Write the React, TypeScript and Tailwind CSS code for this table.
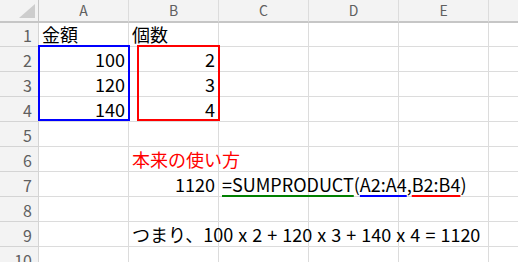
import React from "react";

const font = { fontFamily: '"Noto Sans CJK JP", "Noto Sans", sans-serif' };

const cols = ["A", "B", "C", "D", "E", "F"];

type Cell = { text?: React.ReactNode; align?: "left" | "right"; className?: string };

// row number -> column index -> cell
const data: Record<number, Record<number, Cell>> = {
    1: { 0: { text: "金額" }, 1: { text: "個数" } },
    2: { 0: { text: "100", align: "right" }, 1: { text: "2", align: "right" } },
    3: { 0: { text: "120", align: "right" }, 1: { text: "3", align: "right" } },
    4: { 0: { text: "140", align: "right" }, 1: { text: "4", align: "right" } },
    6: { 1: { text: "本来の使い方", className: "text-[#ff0000]" } },
    7: {
        1: { text: "1120", align: "right" },
        2: {
            text: (
                <>
                    <span className="underline decoration-2 decoration-[#008000] underline-offset-[3px]">=SUMPRODUCT</span>
                    (
                    <span className="underline decoration-2 decoration-[#0000ff] underline-offset-[3px]">A2:A4</span>
                    ,
                    <span className="underline decoration-2 decoration-[#ff0000] underline-offset-[3px]">B2:B4</span>
                    )
                </>
            ),
        },
    },
    9: { 1: { text: "つまり、100 x 2 + 120 x 3 + 140 x 4 = 1120", className: "[word-spacing:1px]" } },
};

function Row({ n }: { n: number }) {
    const first = n === 1;
    return (
        <div className={`flex ${first ? "h-[24px]" : "h-[25px]"}`}>
            <div className="w-[39px] shrink-0 bg-[#f3f3f3] border-r border-b border-[#d4d4d4] flex items-end justify-end pr-[6px] pb-[2px] text-[16px] leading-[18px] text-[#5f5f5f]">
                {n}
            </div>
            {cols.map((c, i) => {
                const cell = data[n]?.[i];
                return (
                    <div
                        key={c}
                        className={`w-[90px] shrink-0 border-r border-b border-[#dcdcdc] flex items-end pb-[3px] text-[18px] leading-[18px] text-black whitespace-nowrap relative ${cell?.align === "right" ? "justify-end pr-[3px]" : "pl-[3px]"}`}
                    >
                        {cell && (
                            <span className={`${cell.align === "right" ? "" : "absolute left-[3px] bottom-[3px]"} ${cell.className ?? ""} z-10`}>
                                {cell.text}
                            </span>
                        )}
                    </div>
                );
            })}
        </div>
    );
}

export default function App() {
    return (
        <div className="w-[518px] h-[262px] overflow-hidden bg-white relative" style={font}>
            {/* column header */}
            <div className="flex h-[23px]">
                <div className="w-[39px] shrink-0 bg-[#f3f3f3] border-r border-b-2 border-[#c6c6c6] flex items-end justify-end pr-[3px] pb-[3px]">
                    <svg width="16" height="14" viewBox="0 0 16 14">
                        <polygon points="16,0 16,14 0,14" fill="#cdcdcd" />
                    </svg>
                </div>
                {cols.map((c) => (
                    <div
                        key={c}
                        className="w-[90px] shrink-0 bg-[#f3f3f3] border-r border-b-2 border-r-[#dcdcdc] border-b-[#c6c6c6] flex items-center justify-center text-[14px] text-[#5f5f5f]"
                    >
                        {c}
                    </div>
                ))}
            </div>
            {Array.from({ length: 10 }, (_, i) => (
                <Row key={i} n={i + 1} />
            ))}

            {/* selection boxes */}
            <div className="absolute left-[38px] top-[45px] w-[92px] h-[76px] border-2 border-[#0000ff] pointer-events-none" />
            <div className="absolute left-[137px] top-[45px] w-[83px] h-[76px] border-2 border-[#ff0000] pointer-events-none" />
        </div>
    );
}
